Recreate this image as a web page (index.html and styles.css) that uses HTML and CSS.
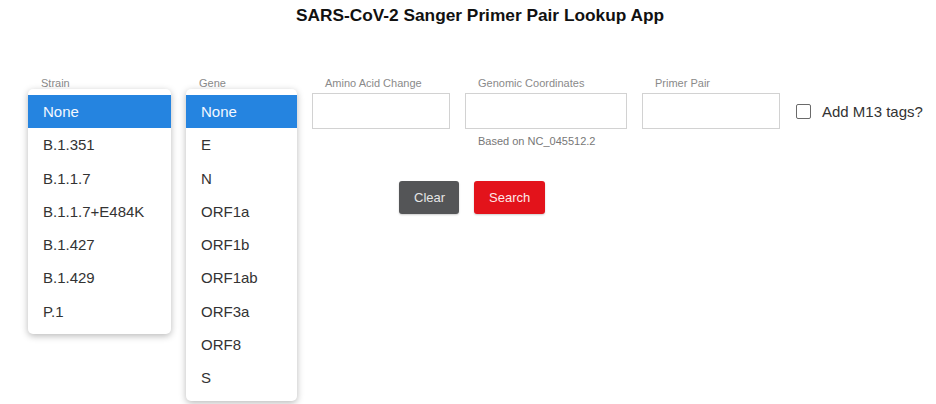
FILE: index.html
```html
<!DOCTYPE html>
<html lang="en">
<head>
<meta charset="utf-8">
<title>SARS-CoV-2 Sanger Primer Pair Lookup App</title>
<link rel="stylesheet" href="styles.css">
</head>
<body>
<h1 class="title">SARS-CoV-2 Sanger Primer Pair Lookup App</h1>
<div class="form">
  <div class="field strain">
    <div class="label">Strain</div>
    <ul class="menu">
      <li class="opt selected">None</li>
      <li class="opt">B.1.351</li>
      <li class="opt">B.1.1.7</li>
      <li class="opt">B.1.1.7+E484K</li>
      <li class="opt">B.1.427</li>
      <li class="opt">B.1.429</li>
      <li class="opt">P.1</li>
    </ul>
  </div>
  <div class="field gene">
    <div class="label">Gene</div>
    <ul class="menu">
      <li class="opt selected">None</li>
      <li class="opt">E</li>
      <li class="opt">N</li>
      <li class="opt">ORF1a</li>
      <li class="opt">ORF1b</li>
      <li class="opt">ORF1ab</li>
      <li class="opt">ORF3a</li>
      <li class="opt">ORF8</li>
      <li class="opt">S</li>
    </ul>
  </div>
  <div class="main">
    <div class="inputs">
      <div class="field amino">
        <div class="label">Amino Acid Change</div>
        <div class="input"></div>
      </div>
      <div class="field coords">
        <div class="label">Genomic Coordinates</div>
        <div class="input"></div>
        <div class="help">Based on NC_045512.2</div>
      </div>
      <div class="field primer">
        <div class="label">Primer Pair</div>
        <div class="input"></div>
      </div>
      <label class="check"><span class="box"></span><span>Add M13 tags?</span></label>
    </div>
    <div class="buttons">
      <button class="btn clear">Clear</button>
      <button class="btn search">Search</button>
    </div>
  </div>
</div>
</body>
</html>
```

FILE: styles.css
```css
html, body {
  margin: 0;
  padding: 0;
  background: #fff;
}
body {
  font-family: "Liberation Sans", Arial, sans-serif;
  color: #333;
  width: 936px;
  height: 404px;
  overflow: hidden;
}
.title {
  margin: 5px 0 0;
  font-size: 17.3px;
  line-height: 20px;
  font-weight: bold;
  color: #111;
  text-align: center;
  padding-left: 24px;
}
.form {
  display: flex;
  align-items: flex-start;
  gap: 15px;
  margin-top: 53px;
  padding-left: 28px;
}
.field {
  display: flex;
  flex-direction: column;
}
.label {
  font-size: 11px;
  line-height: 11px;
  color: #8a8a8a;
  padding-left: 13px;
}
.strain { width: 143px; }
.gene { width: 111px; }
.menu {
  list-style: none;
  margin: 0;
  padding: 6px 0;
  background: #fff;
  border-radius: 5px;
  box-shadow: 0 2px 7px rgba(0, 0, 0, 0.28);
}
.opt {
  height: 33.3px;
  line-height: 33.3px;
  padding-left: 15px;
  font-size: 15px;
  color: #333;
  white-space: nowrap;
}
.opt.selected {
  background: #2584e0;
  color: #f4f8ff;
}
.main {
  display: flex;
  flex-direction: column;
}
.inputs {
  display: flex;
  align-items: flex-start;
  gap: 15px;
}
.input {
  margin-top: 4px;
  height: 34px;
  border: 1px solid #d2d2d2;
  background: #fff;
}
.amino { width: 138px; }
.coords { width: 162px; }
.primer { width: 138px; }
.help {
  margin-top: 6px;
  padding-left: 13px;
  font-size: 11px;
  line-height: 13px;
  color: #777;
}
.check {
  display: flex;
  align-items: center;
  margin-top: 15px;
  margin-left: 1px;
  height: 36px;
  font-size: 15px;
  color: #333;
}
.box {
  width: 13px;
  height: 13px;
  border: 1.5px solid #6a6a6a;
  border-radius: 2px;
  margin-right: 11px;
}
.buttons {
  display: flex;
  gap: 15px;
  margin-top: 33px;
  margin-left: 87px;
}
.btn {
  height: 33px;
  padding: 0 15px;
  border: none;
  border-radius: 3px;
  font-family: "Liberation Sans", Arial, sans-serif;
  font-size: 13px;
  box-shadow: 0 1px 2px rgba(0, 0, 0, 0.2);
}
.clear {
  width: 60px;
  background: #545557;
  color: #e6e6e6;
}
.search {
  width: 71px;
  background: #e3131b;
  color: #fde8e8;
}
```
